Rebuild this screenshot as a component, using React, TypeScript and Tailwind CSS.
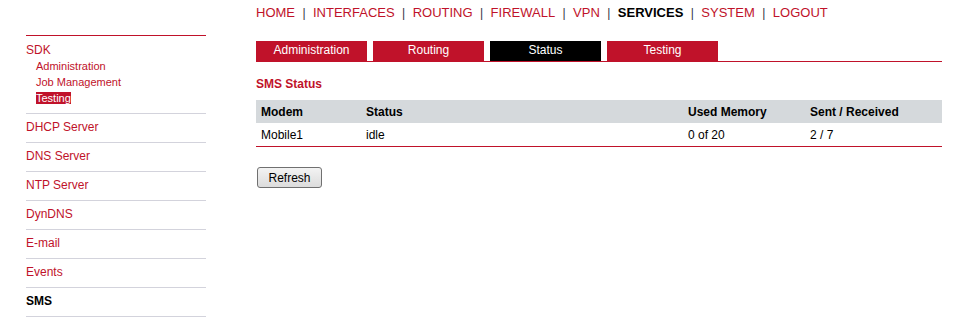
import React from 'react';

const RED = 'text-[#c0122a]';

const topNav = ['HOME', 'INTERFACES', 'ROUTING', 'FIREWALL', 'VPN', 'SERVICES', 'SYSTEM', 'LOGOUT'];
const tabs = ['Administration', 'Routing', 'Status', 'Testing'];
const sideItems = ['DHCP Server', 'DNS Server', 'NTP Server', 'DynDNS', 'E-mail', 'Events', 'SMS'];

export default function App() {
  return (
    <div className="w-[965px] h-[322px] bg-white overflow-hidden flex pl-[26px] font-['Liberation_Sans',Arial,sans-serif]">
      {/* sidebar */}
      <aside className="w-[180px] shrink-0 pt-[35px]">
        <div className="border-t border-[#c0122a] pt-[7px] pb-[7px] border-b border-b-[#d3d3dc]">
          <div className={`text-[12px] leading-[14px] ${RED}`}>SDK</div>
          <ul className="pl-[10px] text-[11px] leading-[16px] mt-[1px]">
            <li className={RED}>Administration</li>
            <li className={RED}>Job Management</li>
            <li>
              <span className="bg-[#c0122a] text-white">Testing</span>
            </li>
          </ul>
        </div>
        {sideItems.map(item => (
          <div
            key={item}
            className={`h-[29px] border-b border-[#d3d3dc] flex items-center pb-[2px] text-[12px] ${
              item === 'SMS' ? 'font-bold text-black' : RED
            }`}
          >
            {item}
          </div>
        ))}
      </aside>

      {/* main */}
      <main className="w-[686px] ml-[50px] pt-[5px]">
        <nav className="flex items-center text-[13px] leading-[16px]">
          {topNav.map((item, i) => (
            <React.Fragment key={item}>
              {i > 0 && <span className="inline-block w-[4px] mx-[7px] text-center text-[12px] text-[#333344]">|</span>}
              <span className={item === 'SERVICES' ? 'font-bold text-black' : RED}>{item}</span>
            </React.Fragment>
          ))}
        </nav>

        <div className="mt-[20px] flex gap-[6px] border-b border-[#c0122a]">
          {tabs.map(tab => (
            <div
              key={tab}
              className={`w-[111px] h-[20px] flex items-center justify-center pb-[2px] text-[12px] text-white ${
                tab === 'Status' ? 'bg-black' : 'bg-[#c0122a]'
              }`}
            >
              {tab}
            </div>
          ))}
        </div>

        <h2 className={`mt-[15px] text-[12px] leading-[14px] font-bold ${RED}`}>SMS Status</h2>

        <div className="mt-[9px] text-[12px] text-black">
          <div className="grid grid-cols-[105px_322px_122px_1fr] h-[23px] items-center bg-[#d5d9dc] font-bold">
            <div className="pl-[5px]">Modem</div>
            <div className="pl-[5px]">Status</div>
            <div className="pl-[5px]">Used Memory</div>
            <div className="pl-[5px]">Sent / Received</div>
          </div>
          <div className="grid grid-cols-[105px_322px_122px_1fr] h-[24px] items-center border-b border-[#c0122a]">
            <div className="pl-[5px]">Mobile1</div>
            <div className="pl-[5px]">idle</div>
            <div className="pl-[5px]">0 of 20</div>
            <div className="pl-[5px]">2 / 7</div>
          </div>
        </div>

        <button className="mt-[20px] ml-[1px] w-[65px] h-[21px] rounded-[3px] border border-[#707070] bg-gradient-to-b from-[#f3f3f3] to-[#dcdcdc] text-[12px] leading-[14px] text-black">
          Refresh
        </button>
      </main>
    </div>
  );
}
